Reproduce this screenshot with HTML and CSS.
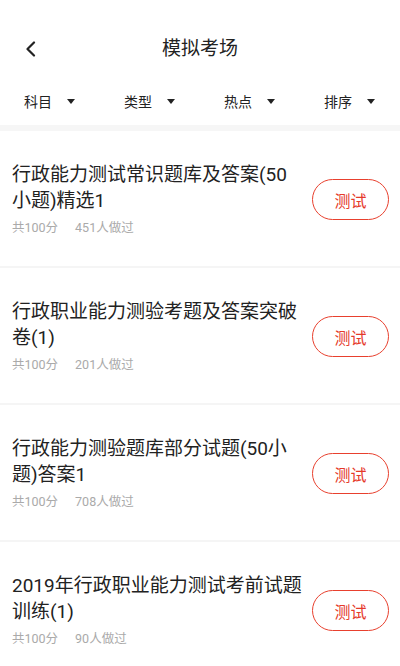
FILE: index.html
```html
<!DOCTYPE html>
<html lang="zh">
<head>
<meta charset="utf-8">
<title>模拟考场</title>
<link rel="stylesheet" href="styles.css">
</head>
<body>
<div class="header">
  <svg class="back" width="14" height="16" viewBox="0 0 14 16"><path d="M10 1.5 L3.5 8 L10 14.5" fill="none" stroke="#222" stroke-width="2.2" stroke-linecap="round" stroke-linejoin="round"/></svg>
  <div class="title">模拟考场</div>
</div>
<div class="filters">
  <div class="filter"><span>科目</span><i class="tri"></i></div>
  <div class="filter"><span>类型</span><i class="tri"></i></div>
  <div class="filter"><span>热点</span><i class="tri"></i></div>
  <div class="filter"><span>排序</span><i class="tri"></i></div>
</div>
<div class="band"></div>
<div class="list">
  <div class="item">
    <div class="info">
      <div class="name">行政能力测试常识题库及答案(50小题)精选1</div>
      <div class="meta"><span>共100分</span><span>451人做过</span></div>
    </div>
    <div class="btn">测试</div>
  </div>
  <div class="item">
    <div class="info">
      <div class="name">行政职业能力测验考题及答案突破卷(1)</div>
      <div class="meta"><span>共100分</span><span>201人做过</span></div>
    </div>
    <div class="btn">测试</div>
  </div>
  <div class="item">
    <div class="info">
      <div class="name">行政能力测验题库部分试题(50小题)答案1</div>
      <div class="meta"><span>共100分</span><span>708人做过</span></div>
    </div>
    <div class="btn">测试</div>
  </div>
  <div class="item">
    <div class="info">
      <div class="name">2019年行政职业能力测试考前试题训练(1)</div>
      <div class="meta"><span>共100分</span><span>90人做过</span></div>
    </div>
    <div class="btn">测试</div>
  </div>
</div>
</body>
</html>
```
FILE: styles.css
```css
* { box-sizing: border-box; }
html, body { margin: 0; padding: 0; background: #fff; }
body {
  font-family: Roboto, "Noto Sans CJK SC", "Noto Sans", sans-serif;
  color: #222;
  width: 400px;
  overflow: hidden;
}
.header {
  position: relative;
  height: 56px;
  margin-top: 21px;
  display: flex;
  align-items: center;
  justify-content: center;
}
.back {
  position: absolute;
  left: 24px;
  top: 20px;
}
.title {
  font-size: 19px;
  color: #222;
  line-height: 56px;
}
.filters {
  display: flex;
  height: 48px;
  align-items: center;
}
.filter {
  width: 100px;
  padding-left: 24px;
  display: flex;
  align-items: center;
  font-size: 14px;
  color: #222;
}
.tri {
  display: block;
  width: 0;
  height: 0;
  margin-left: 15px;
  border-left: 4.5px solid transparent;
  border-right: 4.5px solid transparent;
  border-top: 5px solid #222;
}
.band {
  height: 6px;
  background: #f6f6f6;
}
.item {
  display: flex;
  align-items: center;
  justify-content: space-between;
  padding: 31px 11px 29px 12px;
  border-bottom: 2px solid #f5f5f5;
}
.info {
  width: 292px;
}
.name {
  font-size: 19px;
  line-height: 26px;
  color: #222;
}
.meta {
  margin-top: 5px;
  font-size: 12.5px;
  line-height: 18px;
  color: #aaa;
  display: flex;
  gap: 17px;
}
.btn {
  width: 77px;
  height: 41px;
  border: 1.3px solid #e8402e;
  border-radius: 21px;
  color: #e5392a;
  font-size: 16px;
  display: flex;
  align-items: center;
  justify-content: center;
}
```
